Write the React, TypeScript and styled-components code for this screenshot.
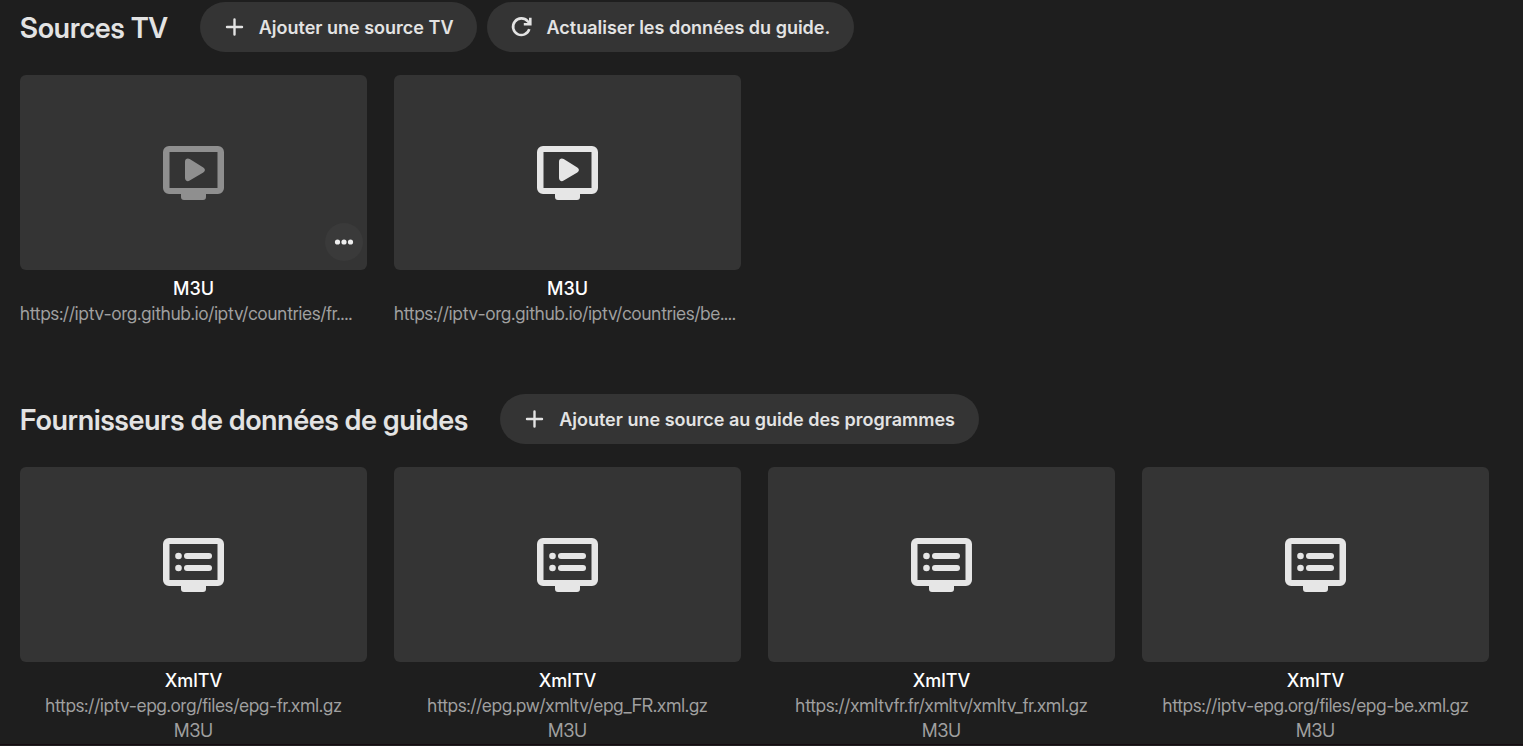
import React from "react";
import styled, { createGlobalStyle } from "styled-components";

const displayFont = `"Inter Display", Inter, "Liberation Sans", sans-serif`;

const GlobalStyle = createGlobalStyle`
  *, *::before, *::after { box-sizing: border-box; }
  body {
    margin: 0;
    background: #1e1e1e;
    color: #e3e3e3;
    font-family: Inter, "Liberation Sans", sans-serif;
    font-size: 18px;
    line-height: 25px;
    overflow-x: hidden;
  }
`;

const Page = styled.main`
  display: flex;
  flex-direction: column;
  gap: 68px;
  padding: 2px 34px 1px 20px;
  border-bottom: 1px solid #170c12;
`;

const Section = styled.section`
  display: flex;
  flex-direction: column;
  gap: 23px;
`;

const Header = styled.header`
  display: flex;
  align-items: center;
  gap: 32px;
`;

const Title = styled.h2`
  margin: 0;
  padding-top: 2px;
  font-family: ${displayFont};
  font-size: 28px;
  line-height: 36px;
  font-weight: 600;
`;

const Actions = styled.div`
  display: flex;
  gap: 10px;
`;

const PillButton = styled.button`
  display: flex;
  align-items: center;
  gap: 12px;
  height: 50px;
  padding: 0 24px 0 22px;
  border: 0;
  border-radius: 25px;
  background: #343434;
  color: inherit;
  font: inherit;
  font-weight: 600;
  white-space: nowrap;
  cursor: pointer;
`;

const Grid = styled.div`
  display: grid;
  grid-template-columns: repeat(4, minmax(0, 1fr));
  gap: 27px;
`;

const Card = styled.article`
  display: flex;
  flex-direction: column;
  gap: 6px;
  text-align: center;
`;

const Thumb = styled.div`
  position: relative;
  display: flex;
  align-items: center;
  justify-content: center;
  aspect-ratio: 16 / 9;
  border-radius: 6px;
  background: #343434;
`;

const DeviceSvg = styled.svg<{ $dimmed?: boolean }>`
  display: block;
  color: ${(p) => (p.$dimmed ? "#8f8f8f" : "#e6e6e6")};
`;

const MoreButton = styled.button`
  position: absolute;
  right: 4px;
  bottom: 9px;
  display: flex;
  align-items: center;
  justify-content: center;
  width: 38px;
  height: 38px;
  padding: 0;
  border: 0;
  border-radius: 50%;
  background: #3a3a3a;
  color: #eeeeee;
  cursor: pointer;
`;

const Name = styled.div`
  color: #ffffff;
  font-weight: 500;
`;

const Detail = styled.div`
  overflow: hidden;
  color: #a0a0a0;
  font-family: ${displayFont};
  white-space: nowrap;
  text-overflow: ellipsis;
`;

const AddIcon = () => (
  <svg width="25" height="24" viewBox="0 0 25 24" aria-hidden="true">
    <path d="M5 12h15M12.500 4.500v15" stroke="currentColor" strokeWidth="2.400" strokeLinecap="round" />
  </svg>
);

const RefreshIcon = () => (
  <svg width="25" height="24" viewBox="0 0 25 24" fill="none" aria-hidden="true">
    <path
      d="M20.300 14.200A8.300 8.300 0 1 1 18.600 6.200L21 8.600M21.300 2.800v6.500h-6.500"
      stroke="currentColor"
      strokeWidth="2.600"
    />
  </svg>
);

type DeviceKind = "player" | "guide";

const DeviceIcon = ({ kind, dimmed }: { kind: DeviceKind; dimmed?: boolean }) => (
  <DeviceSvg $dimmed={dimmed} width="61" height="54" viewBox="0 0 61 54" fill="currentColor" aria-hidden="true">
    <path
      fillRule="evenodd"
      d="M6 0H55A6 6 0 0 1 61 6V42A6 6 0 0 1 55 48H43V51A3 3 0 0 1 40 54H21A3 3 0 0 1 18 51V48H6A6 6 0 0 1 0 42V6A6 6 0 0 1 6 0ZM6.500 6V42H54.500V6Z"
    />
    {kind === "player" ? (
      <path d="M22 15.700C22 13 24.600 11.800 26.700 13.100L40.300 21.600C42.500 23 42.500 25 40.300 26.400L26.700 34.600C24.600 35.900 22 34.800 22 32Z" />
    ) : (
      <>
        <circle cx="15.500" cy="18" r="3.300" />
        <rect x="21" y="15" width="28" height="6" rx="3" />
        <circle cx="15.500" cy="30" r="3.300" />
        <rect x="21" y="27" width="28" height="6" rx="3" />
      </>
    )}
  </DeviceSvg>
);

interface Source {
  name: string;
  details: string[];
  kind: DeviceKind;
  hovered?: boolean;
}

const tvSources: Source[] = [
  { name: "M3U", details: ["https://iptv-org.github.io/iptv/countries/fr.m3u"], kind: "player", hovered: true },
  { name: "M3U", details: ["https://iptv-org.github.io/iptv/countries/be.m3u"], kind: "player" },
];

const guideSources: Source[] = [
  { name: "XmlTV", details: ["https://iptv-epg.org/files/epg-fr.xml.gz", "M3U"], kind: "guide" },
  { name: "XmlTV", details: ["https://epg.pw/xmltv/epg_FR.xml.gz", "M3U"], kind: "guide" },
  { name: "XmlTV", details: ["https://xmltvfr.fr/xmltv/xmltv_fr.xml.gz", "M3U"], kind: "guide" },
  { name: "XmlTV", details: ["https://iptv-epg.org/files/epg-be.xml.gz", "M3U"], kind: "guide" },
];

const SourceGrid = ({ sources }: { sources: Source[] }) => (
  <Grid>
    {sources.map((source) => (
      <Card key={source.details[0]}>
        <Thumb>
          <DeviceIcon kind={source.kind} dimmed={source.hovered} />
          {source.hovered && (
            <MoreButton type="button" aria-label="Plus">
              <svg width="20" height="6" viewBox="0 0 20 6" fill="currentColor" aria-hidden="true">
                <circle cx="3.500" cy="3" r="2.600" />
                <circle cx="10" cy="3" r="2.600" />
                <circle cx="16.500" cy="3" r="2.600" />
              </svg>
            </MoreButton>
          )}
        </Thumb>
        <div>
          <Name>{source.name}</Name>
          {source.details.map((detail) => (
            <Detail key={detail}>{detail}</Detail>
          ))}
        </div>
      </Card>
    ))}
  </Grid>
);

export default function App() {
  return (
    <>
      <GlobalStyle />
      <Page>
        <Section>
          <Header>
            <Title>Sources TV</Title>
            <Actions>
              <PillButton type="button">
                <AddIcon />
                Ajouter une source TV
              </PillButton>
              <PillButton type="button">
                <RefreshIcon />
                Actualiser les données du guide.
              </PillButton>
            </Actions>
          </Header>
          <SourceGrid sources={tvSources} />
        </Section>
        <Section>
          <Header>
            <Title>Fournisseurs de données de guides</Title>
            <Actions>
              <PillButton type="button">
                <AddIcon />
                Ajouter une source au guide des programmes
              </PillButton>
            </Actions>
          </Header>
          <SourceGrid sources={guideSources} />
        </Section>
      </Page>
    </>
  );
}
